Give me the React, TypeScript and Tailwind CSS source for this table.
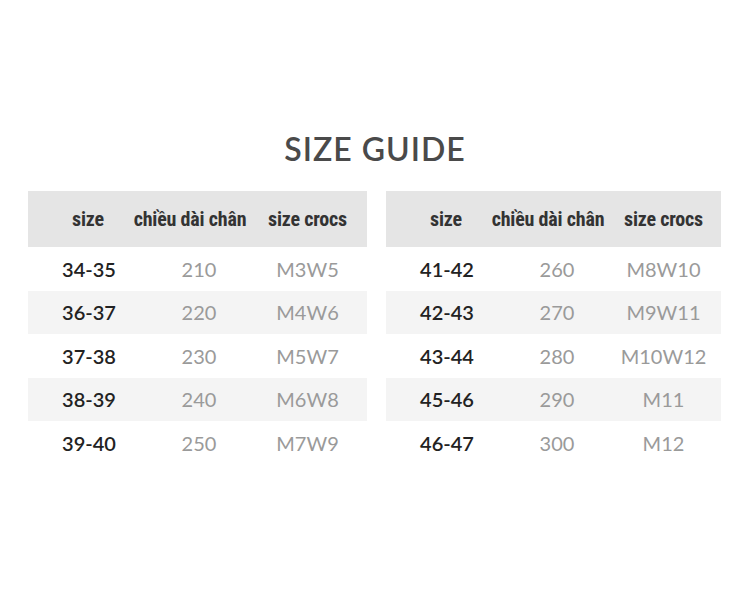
const left = [
  ["34-35", "210", "M3W5"],
  ["36-37", "220", "M4W6"],
  ["37-38", "230", "M5W7"],
  ["38-39", "240", "M6W8"],
  ["39-40", "250", "M7W9"],
];

const right = [
  ["41-42", "260", "M8W10"],
  ["42-43", "270", "M9W11"],
  ["43-44", "280", "M10W12"],
  ["45-46", "290", "M11"],
  ["46-47", "300", "M12"],
];

const SizeTable = ({ rows, width }: { rows: string[][]; width: string }) => (
  <div className={width}>
    <div
      className="grid grid-cols-[122px_98px_1fr] h-[56px] items-center bg-[#e5e5e5] text-[#333] text-[20px] font-bold tracking-[-0.2px]"
      style={{ fontFamily: '"Liberation Sans Narrow", "Roboto Condensed", "Open Sans", sans-serif' }}
    >
      <div className="text-center -ml-[2px]">size</div>
      <div className="text-center -ml-[38px] -mr-[20px] whitespace-nowrap">chiều dài chân</div>
      <div className="text-center">size crocs</div>
    </div>
    {rows.map((r, i) => (
      <div
        key={r[0]}
        className={`grid grid-cols-[122px_98px_1fr] h-[43.5px] items-center text-[20px] font-['Lato',sans-serif] ${
          i % 2 === 1 ? "bg-[#f4f4f4]" : "bg-white"
        }`}
      >
        <div className="text-center text-[#222] font-semibold">{r[0]}</div>
        <div className="text-center text-[#9a9a9a]">{r[1]}</div>
        <div className="text-center text-[#9a9a9a]">{r[2]}</div>
      </div>
    ))}
  </div>
);

export default function App() {
  return (
    <div className="w-[750px] h-[602px] bg-white flex flex-col">
      <h1 className="pt-[130px] h-[191px] text-center text-[32px] leading-[38px] font-semibold text-[#4a4a4a] tracking-[1px] font-['Lato',sans-serif]">
        SIZE GUIDE
      </h1>
      <div className="flex pl-[28px] gap-[19px]">
        <SizeTable rows={left} width="w-[339px]" />
        <SizeTable rows={right} width="w-[335px]" />
      </div>
    </div>
  );
}
